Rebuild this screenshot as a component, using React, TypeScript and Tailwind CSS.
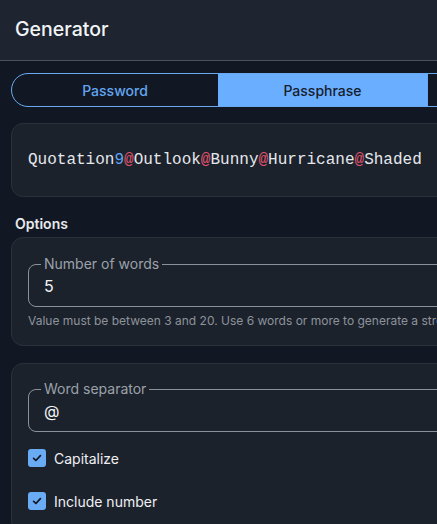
import React from "react";

function Check() {
  return (
    <span className="flex h-[18px] w-[18px] items-center justify-center rounded-[3px] bg-[#6aabf5]">
      <svg width="12" height="12" viewBox="0 0 12 12" fill="none">
        <path d="M2.6 6.3 L4.9 8.5 L9.4 3.6" stroke="#111821" strokeWidth="1.7" strokeLinecap="round" strokeLinejoin="round" />
      </svg>
    </span>
  );
}

function Field({ label, value }: { label: string; value: string }) {
  return (
    <fieldset className="rounded-lg border border-[#8b9099] px-[12px] pb-[10px]">
      <legend className="px-[3px] text-[14px] leading-[14px] text-[#9ba1a9]">{label}</legend>
      <div className="mt-[5px] px-[3px] text-[16px] leading-[20px] text-[#f1f3f5]">{value}</div>
    </fieldset>
  );
}

export default function App() {
  const pw: [string, string][] = [
    ["Quotation", "t"],
    ["9", "n"],
    ["@", "s"],
    ["Outlook", "t"],
    ["@", "s"],
    ["Bunny", "t"],
    ["@", "s"],
    ["Hurricane", "t"],
    ["@", "s"],
    ["Shaded", "t"],
  ];
  return (
    <div className="h-[524px] w-[437px] overflow-hidden bg-[#121823] font-['Inter',sans-serif]">
      <div className="w-[660px]">
        <div className="flex h-[61px] items-center border-b border-[#4d535c] bg-[#1e2530] pl-[15px]">
          <span className="text-[19.5px] font-medium text-[#f2f4f7]">Generator</span>
        </div>
        <div className="px-[11px] pt-[12px]">
          <div className="flex h-[34px] w-[623px] overflow-hidden rounded-full border border-[#6aa9f2] text-[14px] font-medium">
            <div className="flex w-[206px] items-center justify-center text-[#62a6f2]">Password</div>
            <div className="flex w-[209px] items-center justify-center bg-[#6aaeff] text-[#16202d]">Passphrase</div>
            <div className="flex flex-1 items-center justify-center border-l border-[#6aa9f2] text-[#62a6f2]">Username</div>
          </div>

          <div className="mt-[16px] flex h-[74px] items-center rounded-xl border border-[#2a313b] bg-[#1c222c] pl-[16px] font-['Liberation_Mono',monospace] text-[16px]">
            {pw.map(([t, k], i) => (
              <span
                key={i}
                className={k === "n" ? "text-[#5ea3f2]" : k === "s" ? "text-[#e0546c]" : "text-[#e4e7eb]"}
              >
                {t}
              </span>
            ))}
          </div>

          <div className="mt-[19px] pl-[4px] text-[14px] font-semibold leading-[16px] text-[#e8eaee]">Options</div>

          <div className="mt-[5px] rounded-xl border border-[#2a313b] bg-[#1c222c] px-[16px] pb-[16px] pt-[19px]">
            <Field label="Number of words" value="5" />
            <div className="mt-[6px] whitespace-nowrap text-[12px] leading-[16px] text-[#8d939b]">
              Value must be between 3 and 20. Use 6 words or more to generate a strong passphrase.
            </div>
          </div>

          <div className="mt-[17px] rounded-xl border border-[#2a313b] bg-[#1c222c] px-[16px] pb-[17px] pt-[18px]">
            <Field label="Word separator" value="@" />
            <div className="mt-[12px] flex flex-col gap-[15px]">
              <div className="flex h-[28px] items-center gap-[8px]">
                <Check />
                <span className="text-[14px] text-[#eef0f3]">Capitalize</span>
              </div>
              <div className="flex h-[28px] items-center gap-[8px]">
                <Check />
                <span className="text-[14px] text-[#eef0f3]">Include number</span>
              </div>
            </div>
          </div>
        </div>
      </div>
    </div>
  );
}
